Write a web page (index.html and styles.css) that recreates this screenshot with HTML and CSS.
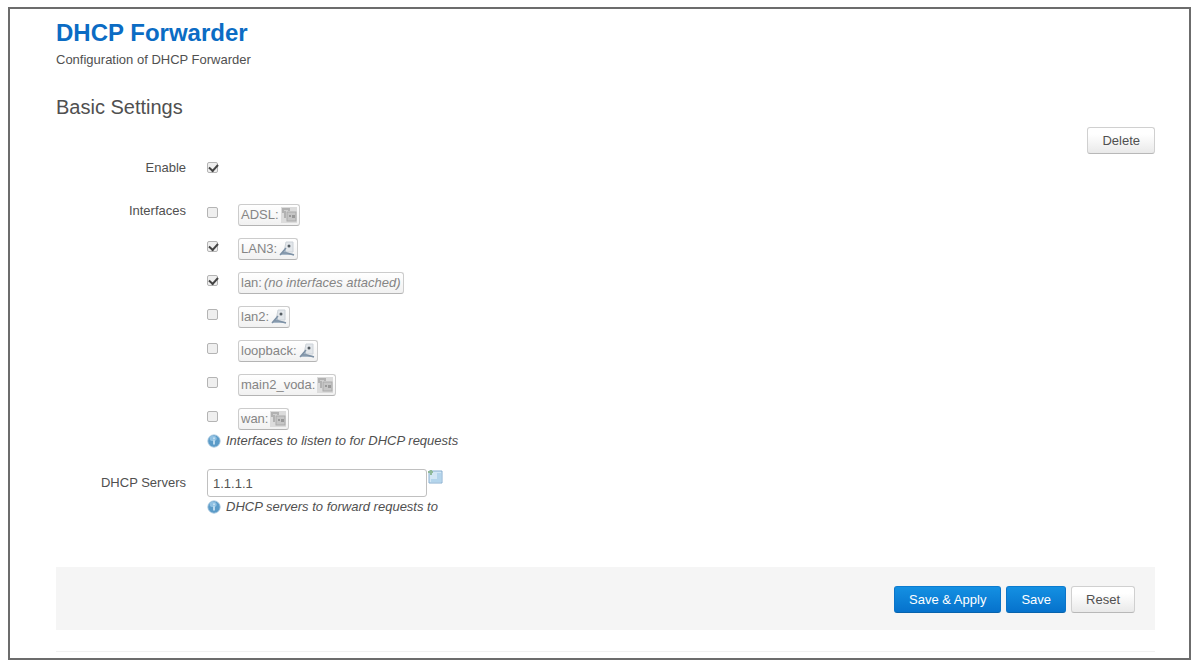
FILE: index.html
```html
<!DOCTYPE html>
<html lang="en">
<head>
  <meta charset="utf-8">
  <title>DHCP Forwarder</title>
  <link rel="stylesheet" href="styles.css">
</head>
<body>
  <!-- shared icons -->
  <svg width="0" height="0" class="icon-defs" aria-hidden="true">
    <symbol id="icon-vlan" viewBox="0 0 16 16">
      <rect width="16" height="16" fill="#dcdcdc"/>
      <path d="M1 1h8v3h-4v7H3V6H1z" fill="#b2b2b2"/>
      <path d="M3 3h4v1H3z" fill="#d0d0d0"/>
      <rect x="6" y="5" width="9" height="9" fill="#c6c6c6" stroke="#aaa"/>
      <path d="M8 8h2v2H8zM11 8h3v3h-3z" fill="#999"/>
    </symbol>
    <symbol id="icon-eth" viewBox="0 0 16 16">
      <path d="M7 1h7v10H5z" fill="#e2e6ea" stroke="#ccd2d8"/>
      <path d="M1 14l5-6 2 4 7 1v1z" fill="#a6b6c6"/>
      <path d="M1 14l6-7M3 12h5l7 2" fill="none" stroke="#7d91a5" stroke-width="1.5"/>
      <circle cx="10" cy="5" r="1.5" fill="#555d63"/>
    </symbol>
    <symbol id="icon-help" viewBox="0 0 16 16">
      <circle cx="8" cy="8" r="7" fill="#5b9bc8" stroke="#9abfda"/>
      <ellipse cx="7" cy="5" rx="4" ry="3" fill="#8fc0e2"/>
      <path d="M7 4h2v2H7zM7 7h2v5H7z" fill="#c9e2f3"/>
    </symbol>
    <symbol id="icon-add" viewBox="0 0 16 16">
      <path d="M2 2h13v12H2z" fill="#d3e7f5" stroke="#86aed0"/>
      <path d="M10 4h4v9H4v-3h6z" fill="#b4d5ec"/>
      <path d="M1 3h5M4 1v5" stroke="#8fb99a" stroke-width="2"/>
    </symbol>
  </svg>

  <main class="page">
    <h1>DHCP Forwarder</h1>
    <p class="descr">Configuration of DHCP Forwarder</p>

    <form>
      <h2>Basic Settings</h2>
      <div class="section-remove">
        <button type="button" class="btn">Delete</button>
      </div>

      <div class="row row-enable">
        <label class="title" for="enable">Enable</label>
        <div class="field"><input type="checkbox" id="enable" checked></div>
      </div>

      <div class="row row-interfaces" role="group" aria-labelledby="interfaces">
        <span class="title" id="interfaces">Interfaces</span>
        <div class="field">
          <ul class="iface-list">
            <li><input type="checkbox" id="if-adsl"><label class="badge" for="if-adsl">ADSL: <svg><use href="#icon-vlan"/></svg></label></li>
            <li><input type="checkbox" id="if-lan3" checked><label class="badge" for="if-lan3">LAN3: <svg><use href="#icon-eth"/></svg></label></li>
            <li><input type="checkbox" id="if-lan" checked><label class="badge" for="if-lan">lan: <em>(no interfaces attached)</em></label></li>
            <li><input type="checkbox" id="if-lan2"><label class="badge" for="if-lan2">lan2: <svg><use href="#icon-eth"/></svg></label></li>
            <li><input type="checkbox" id="if-loopback"><label class="badge" for="if-loopback">loopback: <svg><use href="#icon-eth"/></svg></label></li>
            <li><input type="checkbox" id="if-voda"><label class="badge" for="if-voda">main2_voda: <svg><use href="#icon-vlan"/></svg></label></li>
            <li><input type="checkbox" id="if-wan"><label class="badge" for="if-wan">wan: <svg><use href="#icon-vlan"/></svg></label></li>
          </ul>
          <p class="help"><svg><use href="#icon-help"/></svg>Interfaces to listen to for DHCP requests</p>
        </div>
      </div>

      <div class="row row-servers">
        <label class="title" for="servers">DHCP Servers</label>
        <div class="field">
          <div class="server-input">
            <input type="text" id="servers" value="1.1.1.1">
            <button type="button" class="add" aria-label="Add"><svg><use href="#icon-add"/></svg></button>
          </div>
          <p class="help"><svg><use href="#icon-help"/></svg>DHCP servers to forward requests to</p>
        </div>
      </div>

      <div class="actions">
        <button type="submit" class="btn primary">Save &amp; Apply</button>
        <button type="submit" class="btn primary">Save</button>
        <button type="reset" class="btn">Reset</button>
      </div>
    </form>
    <hr>
  </main>
</body>
</html>
```
FILE: styles.css
```css
* {
  box-sizing: border-box;
}

body {
  margin: 7px 2px 4px 8px;
  background: #fff;
  color: #505050;
  font: 13px/18px "Liberation Sans", Arial, sans-serif;
}

h1, h2, p, ul {
  margin: 0;
  padding: 0;
}

.icon-defs {
  position: absolute;
}

.page {
  border: 2px solid #6c6c6c;
  padding: 8px 34px 6px 46px;
}

h1 {
  color: #0b6cc4;
  font-size: 24px;
  line-height: 32px;
}

.descr {
  margin-top: 2px;
}

h2 {
  margin-top: 24px;
  font-size: 20px;
  font-weight: normal;
  line-height: 28px;
}

.section-remove {
  display: flex;
  justify-content: flex-end;
  margin-top: 6px;
}

.btn {
  height: 27px;
  padding: 0 14px;
  border: 1px solid #d0d0d0;
  border-bottom-color: #b8b8b8;
  border-radius: 3px;
  background: linear-gradient(#fff, #fff 25%, #e9e9e9);
  color: #505050;
  font: 13px/18px "Liberation Sans", Arial, sans-serif;
}

.btn.primary {
  border-color: #0b7cd0 #0b74c8 #0763ac;
  background: linear-gradient(#1490e2, #0672cc);
  color: #fff;
}

.row {
  display: flex;
  gap: 21px;
}

.title {
  width: 130px;
  text-align: right;
}

.field {
  flex: 1;
}

.row-enable {
  margin-top: 5px;
}

.row-interfaces {
  margin-top: 25px;
}

.row-servers {
  margin-top: 19px;
}

.row-servers .title {
  padding-top: 5px;
}

input[type="checkbox"] {
  display: block;
  appearance: none;
  width: 11px;
  height: 11px;
  margin: 3px 0 0;
  border: 1px solid #b4b4b4;
  border-radius: 2px;
  background: #efefef;
}

input[type="checkbox"]:checked::after {
  content: "";
  display: block;
  width: 7px;
  height: 4px;
  margin: 1px;
  border: solid #444;
  border-width: 0 0 2px 2px;
  transform: rotate(-48deg);
}

.iface-list {
  display: flex;
  flex-direction: column;
  gap: 12px;
  padding: 2px 0;
  list-style: none;
}

.iface-list li {
  display: flex;
  align-items: flex-start;
  gap: 20px;
}

.badge {
  display: flex;
  align-items: center;
  gap: 2px;
  height: 22px;
  padding: 0 2px;
  border: 1px solid #ccc;
  border-bottom-color: #b4b4b4;
  border-radius: 3px;
  background: linear-gradient(#fff, #f1f1f1);
  color: #858585;
}

.badge svg {
  width: 16px;
  height: 16px;
}

.help {
  display: flex;
  align-items: center;
  gap: 5px;
  font-style: italic;
}

.help svg {
  width: 14px;
  height: 14px;
}

.server-input {
  display: flex;
  align-items: flex-start;
}

.server-input input {
  width: 220px;
  height: 28px;
  padding: 0 5px;
  border: 1px solid #c0c0c0;
  border-radius: 3px;
  color: #555;
  font: 13px/18px "Liberation Sans", Arial, sans-serif;
}

.add {
  padding: 0;
  border: 0;
  background: none;
}

.add svg {
  display: block;
  width: 16px;
  height: 16px;
}

.row-servers .help {
  margin-top: 1px;
}

.actions {
  display: flex;
  justify-content: flex-end;
  gap: 5px;
  margin-top: 51px;
  padding: 19px 20px 17px;
  background: #f5f5f5;
}

hr {
  margin: 21px 0 0;
  border: 0;
  border-top: 1px solid #f1f1f1;
}
```
